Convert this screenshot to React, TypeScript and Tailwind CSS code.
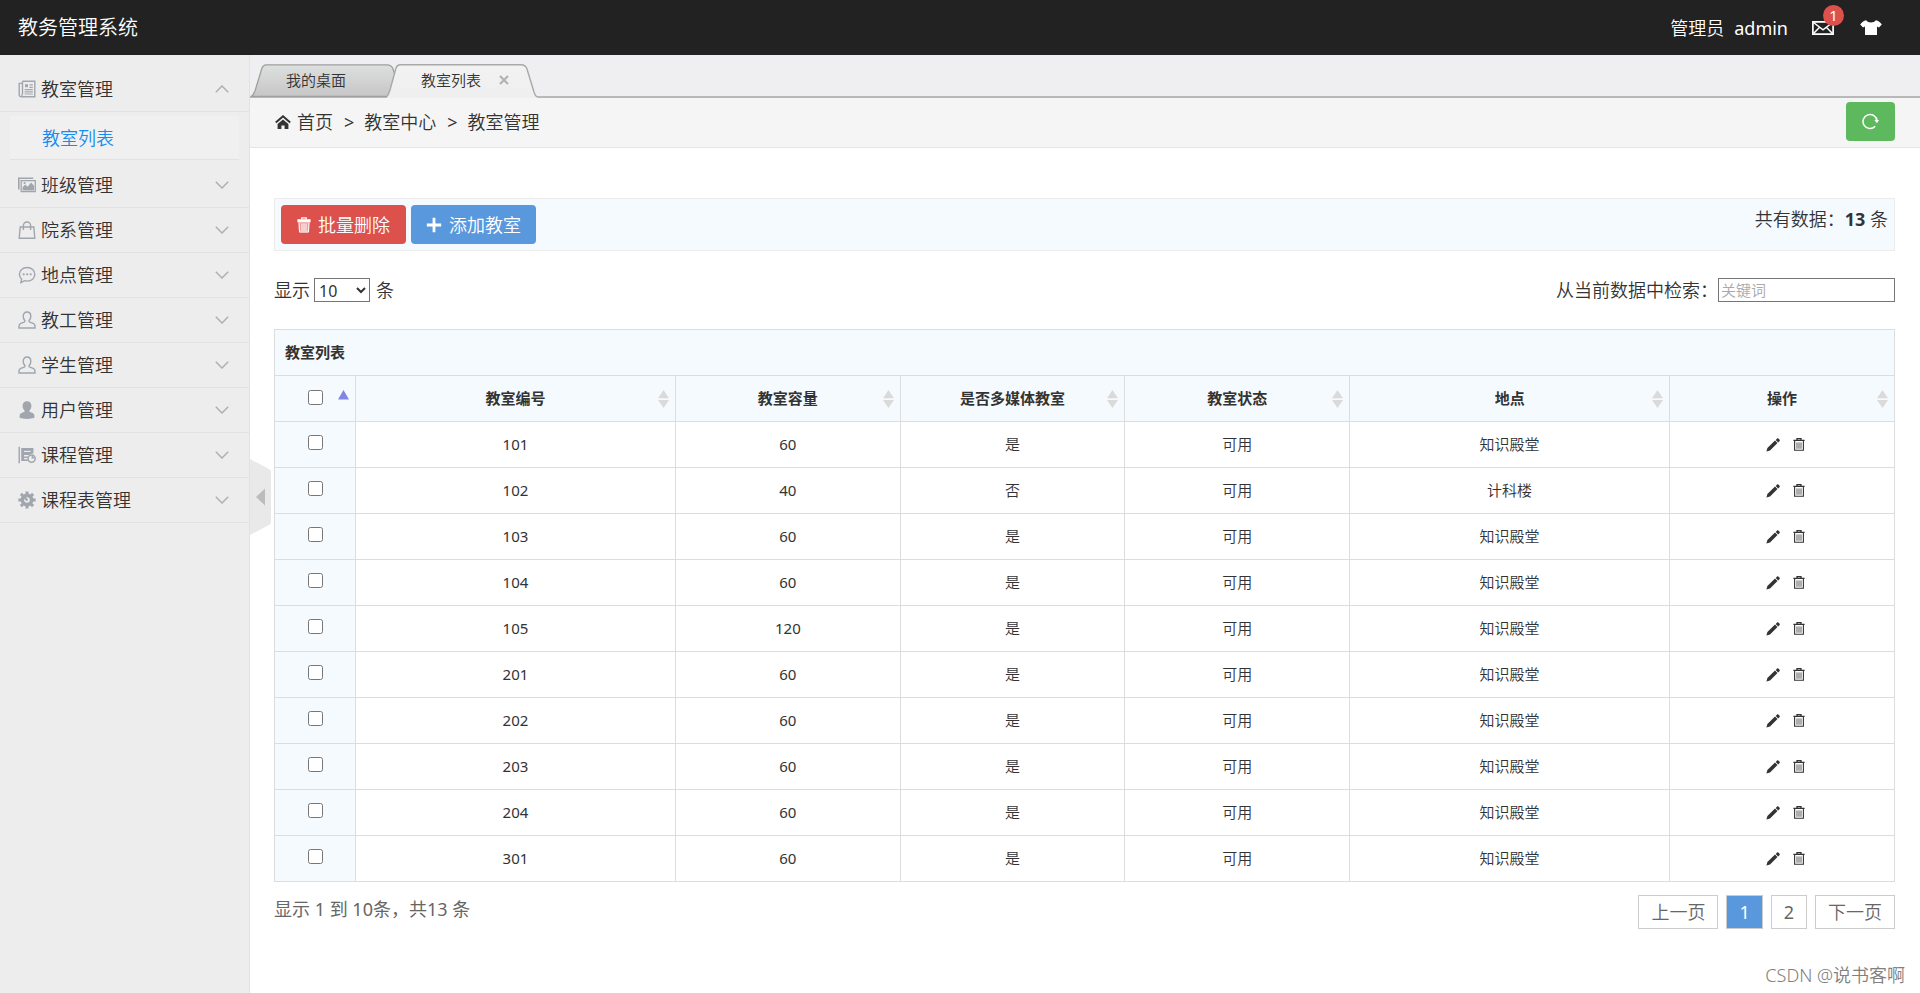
import React, { useState } from "react";

type IconProps = { className?: string };

function Svg({ className, children, box = "0 0 18 18" }: IconProps & { children: React.ReactNode; box?: string }) {
  return (
    <svg viewBox={box} fill="none" stroke="currentColor" strokeWidth="1.4" className={className} aria-hidden="true">
      {children}
    </svg>
  );
}

const NewsIcon = ({ className }: IconProps) => (
  <Svg className={className}>
    <path d="M4.5 1.2h12.3v15.6H3.2c-1.2 0-2-.8-2-2V3.4h3.3M4.5 1.2v12.6c0 1-.5 1.6-1.3 1.6" />
    <path d="M7 4.2h3v3H7z" fill="currentColor" stroke="none" />
    <path d="M11.4 4.8h3.4M11.4 7.3h3.4M6.6 9.6h8.2M6.6 11.8h8.2M6.6 14h8.2" strokeWidth="1.2" />
  </Svg>
);
const PictureIcon = ({ className }: IconProps) => (
  <Svg className={className}>
    <path d="M.8 13.5V2.2h14.4" strokeWidth="1.6" />
    <path d="M3.2 4.7h14.1v11H3.2z" strokeWidth="1.3" />
    <path d="M4.6 14.4v-3.2l2.5-2.6 2.5 2.2 3.5-4.2 3 3.2v4.6z" fill="currentColor" stroke="none" />
    <circle cx="6.6" cy="7" r="1.1" fill="currentColor" stroke="none" />
  </Svg>
);
const BagIcon = ({ className }: IconProps) => (
  <Svg className={className}>
    <path d="M2.2 6h13.6l1 11.2H1.2z" />
    <path d="M5.4 9V4.6a3.6 3.6 0 0 1 7.2 0V9" />
  </Svg>
);
const ChatIcon = ({ className }: IconProps) => (
  <Svg className={className}>
    <path d="M9.2 1.5c4.4 0 7.6 2.9 7.6 6.8s-3.2 6.8-7.6 6.8c-1 0-1.9-.1-2.7-.4L3 16.6l.6-3.5C2.2 11.9 1.4 10.2 1.4 8.3c0-3.9 3.3-6.8 7.8-6.8z" />
    <g fill="currentColor" stroke="none">
      <circle cx="5.7" cy="8.3" r="1.1" />
      <circle cx="9.2" cy="8.3" r="1.1" />
      <circle cx="12.7" cy="8.3" r="1.1" />
    </g>
  </Svg>
);
const UserIcon = ({ className }: IconProps) => (
  <Svg className={className}>
    <path d="M9 1c2.3 0 3.8 1.7 3.8 4.2 0 1.7-.6 3.2-1.6 4.2-.3.6-.1 1.4.6 1.7l3.4 1.3c1.2.5 1.8 1.5 1.8 2.9v1.7H1v-1.7c0-1.4.6-2.4 1.8-2.9l3.4-1.3c.7-.3.9-1.1.6-1.7-1-1-1.6-2.5-1.6-4.2C5.2 2.7 6.7 1 9 1z" />
  </Svg>
);
const UserSolidIcon = ({ className }: IconProps) => (
  <Svg className={className}>
    <path
      d="M9 .2c2.8 0 4.4 1.8 4.4 4.6 0 2-.7 3.7-1.9 4.8v1.2l3 1.2c1.3.5 1.9 1.5 1.9 3v1.8c-2 .8-4.6 1.1-7.4 1.1s-5.4-.3-7.4-1.1V15c0-1.5.6-2.5 1.9-3l3-1.2V9.6C5.3 8.5 4.6 6.8 4.6 4.8 4.6 2 6.2.2 9 .2z"
      fill="currentColor"
      stroke="none"
    />
  </Svg>
);
const CourseIcon = ({ className }: IconProps) => (
  <Svg className={className}>
    <path d="M1.2.8v16.4" />
    <path d="M3.2 2h12.2v5.6a5 5 0 0 0-4.3 1.5H6v1.3h4.2l-.6 1.6H6v1.3h3.5l.3 1.6H3.2z" fill="currentColor" stroke="none" />
    <path d="M6 5.4h6.6" stroke="#ededed" strokeWidth="1.1" />
    <circle cx="13.6" cy="12.6" r="3.6" strokeWidth="1.5" />
    <path d="M13.6 12.6V9l3.4 3.6z" fill="currentColor" stroke="none" />
  </Svg>
);
const GearIcon = ({ className }: IconProps) => (
  <Svg className={className}>
    <circle cx="9" cy="9" r="4.6" strokeWidth="3.6" />
    <path d="M9 .4v3M9 14.6v3M.4 9h3M14.6 9h3M2.9 2.9 5 5M13 13l2.1 2.1M2.9 15.1 5 13M13 5l2.1-2.1" strokeWidth="3" />
    <path d="M9.4 9.4 6.7 6.6" strokeWidth="2.2" />
  </Svg>
);
const ChevronIcon = ({ className }: IconProps) => (
  <Svg className={className} box="0 0 14 8">
    <path d="M.8.8 7 7 13.2.8" strokeWidth="1.5" />
  </Svg>
);
const HomeIcon = ({ className }: IconProps) => (
  <Svg className={className} box="0 0 16 14">
    <path d="M.8 7.6 8 1.3l7.2 6.3" strokeWidth="2" />
    <path d="M8 4.4 13.4 9v5H9.6v-3.6H6.4V14H2.6V9z" fill="currentColor" stroke="none" />
  </Svg>
);
const TrashSolidIcon = ({ className }: IconProps) => (
  <Svg className={className} box="0 0 14 16">
    <path d="M4.8 2.2V.9h4.4v1.3" strokeWidth="1.3" />
    <path d="M.4 2.2h13.2v3H.4z" fill="currentColor" stroke="none" />
    <path d="M1.5 5h11l-.6 10.4H2.1z" fill="currentColor" fillOpacity=".45" stroke="none" />
    <path d="M2 5.4 2.5 15h9l.5-9.6M5 6.4V14M7 6.4V14M9 6.4V14" strokeWidth="1" />
  </Svg>
);
const TrashIcon = ({ className }: IconProps) => (
  <Svg className={className} box="0 0 12 13">
    <path d="M.4 2.3h11.2M4 2V.7h4V2" strokeWidth="1.3" />
    <path d="M1.6 3v9.3h8.8V3" strokeWidth="1.1" />
    <path d="M4 4.4v6.4M6 4.4v6.4M8 4.4v6.4" strokeWidth=".8" />
  </Svg>
);
const PencilIcon = ({ className }: IconProps) => (
  <Svg className={className} box="0 0 14 14">
    <path d="M.4 13.6 1.4 10l7.6-7.4 2.5 2.5-7.5 7.5z" fill="currentColor" stroke="none" />
    <path d="m9.7 1.9 1.2-1.2c.5-.5 1.1-.5 1.6 0l.9.9c.5.5.5 1.1 0 1.6l-1.2 1.2z" fill="currentColor" stroke="none" />
  </Svg>
);
const PlusIcon = ({ className }: IconProps) => (
  <Svg className={className} box="0 0 16 16">
    <path d="M8 .8v14.4M.8 8h14.4" strokeWidth="2.8" />
  </Svg>
);
const RefreshIcon = ({ className }: IconProps) => (
  <Svg className={className} box="0 0 17 17">
    <path d="M13.2 13.2A7 7 0 1 1 15 8" strokeWidth="1.5" />
    <path d="M12.4 7H17l-2.1 3.2z" fill="currentColor" stroke="none" />
  </Svg>
);
const MailIcon = ({ className }: IconProps) => (
  <Svg className={className} box="0 0 22 14">
    <path d="M.9.9h20.2v12.2H.9z" strokeWidth="1.7" />
    <path d="M1.5 1.5 11 8.8l9.5-7.3M1.5 12.5l5.9-6.1M20.5 12.5l-5.9-6.1" strokeWidth="1.5" />
  </Svg>
);
const ShirtIcon = ({ className }: IconProps) => (
  <Svg className={className} box="0 0 22 15">
    <path d="M6.2.2c1 1.5 2.8 2.2 4.8 2.2S14.8 1.7 15.8.2c2.5.5 4.5 1.8 6 4.3L19 7.6l-2-1.2V15H5V6.4L3 7.6.2 4.5C1.7 2 3.7.7 6.2.2z" fill="currentColor" stroke="none" />
  </Svg>
);

const MENU = [
  { label: "教室管理", Icon: NewsIcon, children: ["教室列表"] },
  { label: "班级管理", Icon: PictureIcon },
  { label: "院系管理", Icon: BagIcon },
  { label: "地点管理", Icon: ChatIcon },
  { label: "教工管理", Icon: UserIcon },
  { label: "学生管理", Icon: UserIcon },
  { label: "用户管理", Icon: UserSolidIcon },
  { label: "课程管理", Icon: CourseIcon },
  { label: "课程表管理", Icon: GearIcon },
];

const COLUMNS = ["教室编号", "教室容量", "是否多媒体教室", "教室状态", "地点", "操作"];

const ROOMS = [
  { id: "101", seats: "60", media: "是", state: "可用", place: "知识殿堂" },
  { id: "102", seats: "40", media: "否", state: "可用", place: "计科楼" },
  { id: "103", seats: "60", media: "是", state: "可用", place: "知识殿堂" },
  { id: "104", seats: "60", media: "是", state: "可用", place: "知识殿堂" },
  { id: "105", seats: "120", media: "是", state: "可用", place: "知识殿堂" },
  { id: "201", seats: "60", media: "是", state: "可用", place: "知识殿堂" },
  { id: "202", seats: "60", media: "是", state: "可用", place: "知识殿堂" },
  { id: "203", seats: "60", media: "是", state: "可用", place: "知识殿堂" },
  { id: "204", seats: "60", media: "是", state: "可用", place: "知识殿堂" },
  { id: "301", seats: "60", media: "是", state: "可用", place: "知识殿堂" },
];

function Header() {
  return (
    <header className="flex h-[55px] items-center justify-between bg-[#222] pr-[38px] pl-[18px] text-white">
      <a href="#" className="text-xl">教务管理系统</a>
      <div className="flex items-center text-lg">
        <span className="mr-[10px]">管理员</span>
        <a href="#" className="mr-6 font-normal">admin</a>
        <button type="button" aria-label="消息" className="relative mr-[26px]">
          <MailIcon className="h-[14px] w-[22px]" />
          <span className="absolute -top-4 -right-[10px] flex size-[21px] items-center justify-center rounded-full bg-[#dd514c] text-[15px] leading-none font-normal">1</span>
        </button>
        <button type="button" aria-label="换肤">
          <ShirtIcon className="h-[15px] w-[22px]" />
        </button>
      </div>
    </header>
  );
}

function Sidebar() {
  return (
    <aside className="w-[250px] shrink-0 border-r border-[#e2e2e2] bg-[#ededed] pt-3">
      <nav>
        {MENU.map(({ label, Icon, children }) => (
          <div key={label}>
            <button type="button" className="flex h-[45px] w-full items-center border-b border-[#e2e2e2] pr-5 pl-[18px] text-lg">
              <Icon className="mr-[5px] size-[18px] text-[#a0a5ae]" />
              <span className="flex-1 text-left">{label}</span>
              <ChevronIcon className={children ? "h-2 w-[14px] rotate-180 text-[#b0b0b0]" : "h-2 w-[14px] text-[#b0b0b0]"} />
            </button>
            {children && (
              <div className="px-[10px] pt-1 pb-[3px]">
                {children.map((child) => (
                  <a key={child} href="#" className="flex h-11 items-center border-b border-[#e2e2e2] bg-[#f0f0f0] pl-8 text-lg text-[#148cf1]">
                    {child}
                  </a>
                ))}
              </div>
            )}
          </div>
        ))}
      </nav>
    </aside>
  );
}

function Tabs() {
  return (
    <div className="flex h-[43px] items-end border-b-2 border-[#b8b8b8] bg-[#efeef0] text-[15px]">
      <button type="button" className="relative h-8 w-[137px] pl-9 text-left">
        <svg viewBox="0 0 146 33" className="absolute top-0 left-0 h-[33px] w-[146px]" aria-hidden="true">
          <defs>
            <linearGradient id="tab-idle" x1="0" y1="0" x2="0" y2="1">
              <stop offset="0" stopColor="#dedfdf" />
              <stop offset="1" stopColor="#c6c6c7" />
            </linearGradient>
          </defs>
          <path d="M1 32.5C3 32 4 29 5 27L12 4C13 1.5 14 .8 16 .8H137C140 .8 142 2 143 5L146 14V32.5z" fill="url(#tab-idle)" stroke="#a0a0a0" strokeWidth="1.3" />
        </svg>
        <span className="relative">我的桌面</span>
      </button>
      <div className="relative flex h-8 w-[150px] items-center pl-[34px]">
        <svg viewBox="0 0 150 34" className="absolute top-0 left-0 h-[34px] w-[150px]" aria-hidden="true">
          <defs>
            <linearGradient id="tab-active" x1="0" y1="0" x2="0" y2="1">
              <stop offset="0" stopColor="#f1f2f1" />
              <stop offset="1" stopColor="#efefef" />
            </linearGradient>
          </defs>
          <path d="M0 34V32C1 31 2 29 3 26L9 4C10 1.5 11 .8 13 .8H134C137 .8 139 2 140 5L147 28C148 31 149 32 150 32V34z" fill="url(#tab-active)" />
          <path d="M0 32.5C1 31 2 29 3 26L9 4C10 1.5 11 .8 13 .8H134C137 .8 139 2 140 5L147 28C148 31 149 32.5 150 32.5" fill="none" stroke="#a8a8a8" strokeWidth="1.4" />
        </svg>
        <button type="button" className="relative">教室列表</button>
        <button type="button" aria-label="关闭" className="relative ml-[18px] text-[#b0b3b6]">
          <svg viewBox="0 0 10 10" className="size-[10px]" stroke="currentColor" strokeWidth="2.2" aria-hidden="true">
            <path d="m1 1 8 8M9 1 1 9" />
          </svg>
        </button>
      </div>
    </div>
  );
}

function Breadcrumb() {
  return (
    <div className="flex h-[50px] items-center justify-between border-b border-[#e5e5e5] bg-[#f5f5f5] px-[25px] pb-0.5 text-lg">
      <nav className="flex items-center">
        <HomeIcon className="mr-1.5 h-[14px] w-4" />
        <a href="#">首页</a>
        <span className="mr-[10px] ml-[11px] font-normal">&gt;</span>
        <span>教室中心</span>
        <span className="mr-[10px] ml-[11px] font-normal">&gt;</span>
        <span>教室管理</span>
      </nav>
      <button type="button" aria-label="刷新" className="flex h-[39px] w-[49px] items-center justify-center rounded bg-[#5eb95e] text-white">
        <RefreshIcon className="size-[17px]" />
      </button>
    </div>
  );
}

function SortIcon() {
  return (
    <svg viewBox="0 0 11 18" className="h-[18px] w-[11px] text-[#dadada]" fill="currentColor" aria-hidden="true">
      <path d="M5.5 0 11 8.3H0zM0 10h11L5.5 18z" />
    </svg>
  );
}

function RoomTable() {
  return (
    <table className="mt-[25px] w-full table-fixed border-collapse border border-[#ddd] text-center text-[15px]">
      <colgroup>
        <col className="w-[5%]" />
        <col className="w-[19.75%]" />
        <col className="w-[13.88%]" />
        <col className="w-[13.86%]" />
        <col className="w-[13.88%]" />
        <col className="w-[19.75%]" />
        <col className="w-[13.88%]" />
      </colgroup>
      <thead className="bg-[#f5fafe]">
        <tr className="h-[46px]">
          <th colSpan={7} scope="colgroup" className="border border-[#ddd] px-[10px] text-left">教室列表</th>
        </tr>
        <tr className="h-[46px]">
          <th className="border border-[#ddd] px-[6px]">
            <div className="mb-0.5 flex items-center">
              <span className="flex-1" />
              <input type="checkbox" aria-label="全选" className="size-[15px]" />
              <span className="flex flex-1 justify-end">
                <svg viewBox="0 0 11 16" className="h-4 w-[11px] text-[#8084e4]" fill="currentColor" aria-hidden="true">
                  <path d="M5.5 0 11 9.5H0z" />
                </svg>
              </span>
            </div>
          </th>
          {COLUMNS.map((name) => (
            <th key={name} className="border border-[#ddd] px-[6px]">
              <button type="button" className="flex w-full items-center">
                <span className="flex-1" />
                {name}
                <span className="flex flex-1 justify-end"><SortIcon /></span>
              </button>
            </th>
          ))}
        </tr>
      </thead>
      <tbody>
        {ROOMS.map((room) => (
          <tr key={room.id} className="h-[46px]">
            <td className="border border-[#ddd] bg-[#f5fafe]">
              <input type="checkbox" aria-label={room.id} className="mb-1.5 size-[15px] align-middle" />
            </td>
            <td className="border border-[#ddd] font-normal">{room.id}</td>
            <td className="border border-[#ddd] font-normal">{room.seats}</td>
            <td className="border border-[#ddd]">{room.media}</td>
            <td className="border border-[#ddd]">{room.state}</td>
            <td className="border border-[#ddd]">{room.place}</td>
            <td className="border border-[#ddd] pl-1.5">
              <div className="flex items-center justify-center gap-[13px]">
                <button type="button" aria-label="编辑"><PencilIcon className="size-[14px]" /></button>
                <button type="button" aria-label="删除"><TrashIcon className="h-[13px] w-3" /></button>
              </div>
            </td>
          </tr>
        ))}
      </tbody>
    </table>
  );
}

export default function App() {
  const [size, setSize] = useState("10");
  return (
    <div className="relative flex min-h-screen flex-col bg-white font-['Noto_Sans','Noto_Sans_CJK_SC',sans-serif] leading-normal font-[350] text-[#333]">
      <Header />
      <div className="flex flex-1">
        <Sidebar />
        <main className="min-w-0 flex-1">
          <Tabs />
          <Breadcrumb />
          <div className="pt-[50px] pr-[25px] pl-6">
            <div className="flex h-[53px] items-start justify-between border border-[#ececec] bg-[#f5fafe] p-[6px] text-lg">
              <div className="flex gap-[5px]">
                <button type="button" className="flex h-[39px] w-[125px] items-center justify-center gap-[7px] rounded bg-[#dd514c] text-white">
                  <TrashSolidIcon className="h-4 w-[14px]" />
                  批量删除
                </button>
                <button type="button" className="flex h-[39px] w-[125px] items-center justify-center gap-[7px] rounded bg-[#5a98de] text-white">
                  <PlusIcon className="size-4" />
                  添加教室
                </button>
              </div>
              <span>
                共有数据：<strong className="font-bold">13</strong> 条
              </span>
            </div>
            <div className="mt-[25px] flex items-center justify-between text-lg">
              <label className="flex items-center gap-1">
                显示
                <select value={size} onChange={(e) => setSize(e.target.value)} className="h-6 w-14 border border-[#767676] bg-white text-base leading-none font-normal">
                  <option>10</option>
                  <option>25</option>
                  <option>50</option>
                </select>
                <span className="ml-0.5">条</span>
              </label>
              <label className="flex items-center">
                从当前数据中检索：
                <input type="search" placeholder="关键词" className="h-6 w-[177px] border border-[#767676] px-0.5 text-[15px] placeholder:text-[#a9a9a9]" />
              </label>
            </div>
            <RoomTable />
            <div className="mt-[13px] flex items-start justify-between text-lg text-[#666]">
              <span className="font-normal">显示 1 到 10条，共13 条</span>
              <nav className="flex gap-2">
                <a href="#" className="flex h-[34px] items-center border border-[#ccc] px-3">上一页</a>
                <a href="#" className="flex h-[34px] items-center border border-[#ccc] bg-[#5a98de] px-3 font-normal text-white">1</a>
                <a href="#" className="flex h-[34px] items-center border border-[#ccc] px-3 font-normal">2</a>
                <a href="#" className="flex h-[34px] items-center border border-[#ccc] px-3">下一页</a>
              </nav>
            </div>
          </div>
        </main>
      </div>
      <button type="button" aria-label="收起菜单" className="absolute top-1/2 left-[250px] -translate-y-1/2">
        <svg viewBox="0 0 21 76" className="h-[76px] w-[21px]" aria-hidden="true">
          <path d="M0 0 18 9.5C20.5 11 21 11.5 21 13V63C21 64.5 20.5 65 18 66.5L0 76z" fill="#e9e9e9" />
          <path d="M15 29.5V46.5L6 38z" fill="#bcbcbc" />
        </svg>
      </button>
      <span className="absolute right-[15px] bottom-1 text-lg text-[#808080]">CSDN @说书客啊</span>
    </div>
  );
}
